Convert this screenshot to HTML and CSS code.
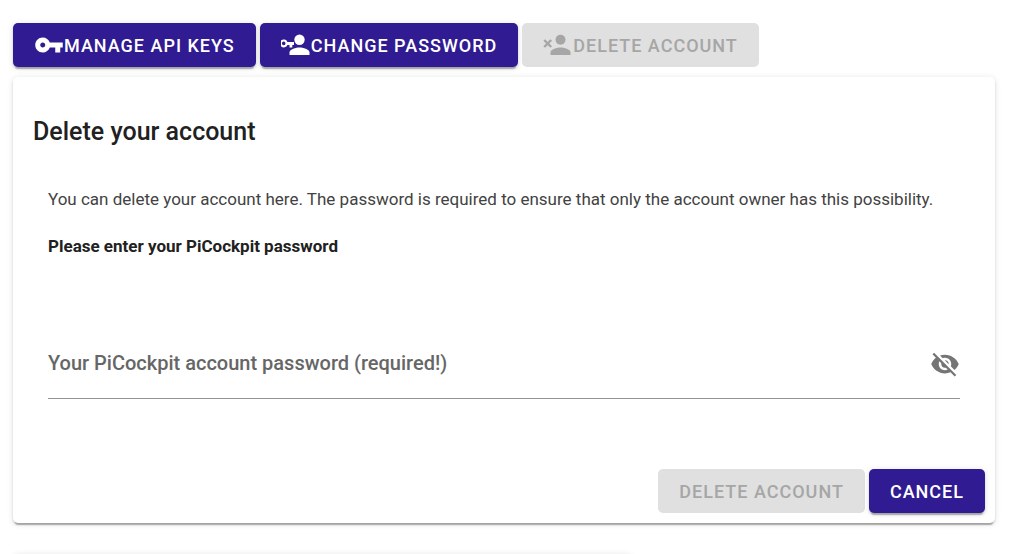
FILE: index.html
```html
<!DOCTYPE html>
<html lang="en">
<head>
    <meta charset="UTF-8">
    <meta name="viewport" content="width=device-width, initial-scale=1.0">
    <title>Delete your account</title>
    <link rel="stylesheet" href="styles.css">
</head>
<body>
    <main class="page">
        <nav class="toolbar">
            <button class="btn" type="button">
                <svg class="icon" viewBox="0 0 24 24" aria-hidden="true"><path d="M12.65 10C11.83 7.67 9.61 6 7 6c-3.31 0-6 2.69-6 6s2.69 6 6 6c2.61 0 4.83-1.67 5.65-4H17v4h4v-4h2v-4H12.65zM7 14c-1.1 0-2-.9-2-2s.9-2 2-2 2 .9 2 2-.9 2-2 2z"/></svg>
                Manage API keys
            </button>
            <button class="btn" type="button">
                <svg class="icon" viewBox="0 0 30 30" aria-hidden="true">
                    <circle cx="18.5" cy="9.7" r="5.2"/>
                    <path d="M8.500 25v-2.500c0-3.400 6.700-5 10-5s10 1.600 10 5V25z"/>
                    <path fill-rule="evenodd" d="M6.400 11.900a4 4 0 1 0 0 3H8.500v2.600h2.800v-2.600h1.700v-3zM2.700 11.600a1.800 1.800 0 1 1 0 3.600 1.800 1.800 0 0 1 0-3.600z"/>
                </svg>
                Change password
            </button>
            <button class="btn" type="button" disabled>
                <svg class="icon" viewBox="0 0 30 30" aria-hidden="true">
                    <circle cx="17.500" cy="9.700" r="5"/>
                    <path d="M7.500 25v-2.500c0-3.400 6.700-5 10-5s10 1.600 10 5V25z"/>
                    <path class="cross" d="M1.200 10l7 7M8.200 10l-7 7"/>
                </svg>
                Delete account
            </button>
        </nav>

        <form class="card">
            <h1 class="card-title">Delete your account</h1>
            <div class="card-text">
                <p>You can delete your account here. The password is required to ensure that only the account owner has this possibility.</p>
                <p class="prompt">Please enter your PiCockpit password</p>
                <div class="field">
                    <label class="field-label" for="password">Your PiCockpit account password (required!)</label>
                    <input class="field-input" id="password" type="password" required>
                    <button class="toggle" type="button" aria-label="Show password">
                        <svg class="icon" viewBox="0 0 24 24" aria-hidden="true"><path d="M12 7c2.76 0 5 2.24 5 5 0 .65-.13 1.26-.36 1.83l2.92 2.92c1.51-1.26 2.7-2.89 3.43-4.75-1.73-4.39-6-7.5-11-7.5-1.4 0-2.74.25-3.98.7l2.16 2.16C10.74 7.13 11.35 7 12 7zM2 4.27l2.28 2.28.46.46C3.08 8.3 1.78 10.02 1 12c1.73 4.39 6 7.5 11 7.5 1.55 0 3.03-.3 4.38-.84l.42.42L19.73 22 21 20.73 3.27 3 2 4.27zM7.53 9.8l1.55 1.55c-.05.21-.08.43-.08.65 0 1.66 1.34 3 3 3 .22 0 .44-.03.65-.08l1.55 1.55c-.67.33-1.41.53-2.2.53-2.76 0-5-2.24-5-5 0-.79.2-1.53.53-2.2zm4.31-.78l3.15 3.15.02-.16c0-1.66-1.34-3-3-3l-.17.01z"/></svg>
                    </button>
                </div>
            </div>
            <div class="card-actions">
                <button class="btn" type="submit" disabled>Delete account</button>
                <button class="btn" type="button">Cancel</button>
            </div>
        </form>

        <section class="card card-next"></section>
    </main>
</body>
</html>
```

FILE: styles.css
```css
* {
    margin: 0;
    padding: 0;
    box-sizing: border-box;
}

body {
    background-color: #fff;
    color: #212121;
    font-family: Roboto, "Liberation Sans", sans-serif;
    font-size: 17px;
    line-height: 27px;
}

.page {
    display: flex;
    flex-direction: column;
    padding: 23px 29px 0 13px;
}

.toolbar {
    display: flex;
    gap: 4px;
    margin-bottom: 10px;
}

.btn {
    display: inline-flex;
    align-items: center;
    height: 44px;
    padding: 0 21px;
    border: none;
    border-radius: 5px;
    background-color: #311b92;
    color: #fff;
    font-family: inherit;
    font-size: 18px;
    font-weight: 500;
    letter-spacing: 1px;
    text-transform: uppercase;
    white-space: nowrap;
    cursor: pointer;
    box-shadow: 0 4px 1px -2px rgba(0, 0, 0, 0.2), 0 2px 2px 0 rgba(0, 0, 0, 0.14), 0 1px 6px 0 rgba(0, 0, 0, 0.12);
}

.btn:disabled {
    background-color: #e0e0e0;
    color: #a6a6a6;
    box-shadow: none;
    cursor: default;
}

.icon {
    flex: none;
    width: 30px;
    height: 30px;
    fill: currentColor;
}

.cross {
    fill: none;
    stroke: currentColor;
    stroke-width: 2.4;
}

.card {
    border-radius: 5px;
    background-color: #fff;
    box-shadow: 0 4px 1px -2px rgba(0, 0, 0, 0.2), 0 2px 2px 0 rgba(0, 0, 0, 0.14), 0 1px 6px 0 rgba(0, 0, 0, 0.12);
}

.card-title {
    padding: 35px 20px 0;
    font-size: 25px;
    font-weight: 500;
    line-height: 40px;
}

.card-text {
    padding: 34px 35px 0;
    color: #424242;
}

.card-text .prompt {
    margin-top: 20px;
    color: #212121;
    font-weight: 700;
}

.field {
    display: grid;
    grid-template-columns: 1fr 30px;
    align-items: center;
    height: 70px;
    margin-top: 69px;
    border-bottom: 1px solid #949494;
}

/* the label rests on the empty input */
.field-label,
.field-input {
    grid-area: 1 / 1;
}

.field-label {
    color: #666;
    font-size: 20px;
    font-weight: 500;
    pointer-events: none;
}

.field-input {
    width: 100%;
    height: 40px;
    border: none;
    outline: none;
    background: transparent;
    font-family: inherit;
    font-size: 20px;
}

.field-input:valid {
    background-color: #fff;
}

.toggle {
    display: flex;
    border: none;
    background: none;
    color: #757575;
    cursor: pointer;
}

.card-actions {
    display: flex;
    justify-content: flex-end;
    gap: 4px;
    padding: 70px 10px 10px;
}

.card-next {
    width: 63%;
    height: 60px;
    margin-top: 31px;
}
```
